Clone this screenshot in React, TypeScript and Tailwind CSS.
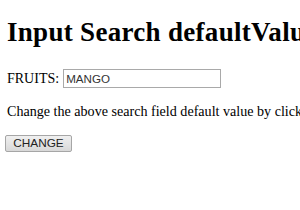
import { useState } from 'react'

const App = () => {
  const [fruit, setFruit] = useState('MANGO')

  return (
    <div className="w-[300px] h-[210px] overflow-hidden bg-white px-[7px] font-['Liberation_Serif',serif] text-black">
      <h1 className="pt-[17px] text-[27px] font-bold leading-[31px] tracking-[0.3px] whitespace-nowrap">
        Input Search defaultValue Property
      </h1>
      <div className="mt-[21px] flex items-center gap-[4px] whitespace-nowrap">
        <label htmlFor="fruit" className="text-[14px] leading-[16px]">
          FRUITS:
        </label>
        <input
          id="fruit"
          type="search"
          value={fruit}
          onChange={(e) => setFruit(e.target.value)}
          className="w-[158px] h-[19px] border border-[#a9a9a9] px-[2px] font-['Liberation_Sans',sans-serif] text-[11.6px] text-[#333] outline-none"
        />
      </div>
      <p className="mt-[15px] text-[14.1px] leading-[16px] whitespace-nowrap">
        Change the above search field default value by clicking the button below.
      </p>
      <button
        onClick={() => setFruit('APPLE')}
        className="mt-[16px] -ml-[2px] h-[17px] w-[67px] rounded-[2px] border border-[#a6a6a6] bg-gradient-to-b from-[#f0f0f0] to-[#d8d8d8] font-['Liberation_Sans',sans-serif] text-[11.8px] leading-none text-[#222]"
      >
        CHANGE
      </button>
    </div>
  )
}

export default App
